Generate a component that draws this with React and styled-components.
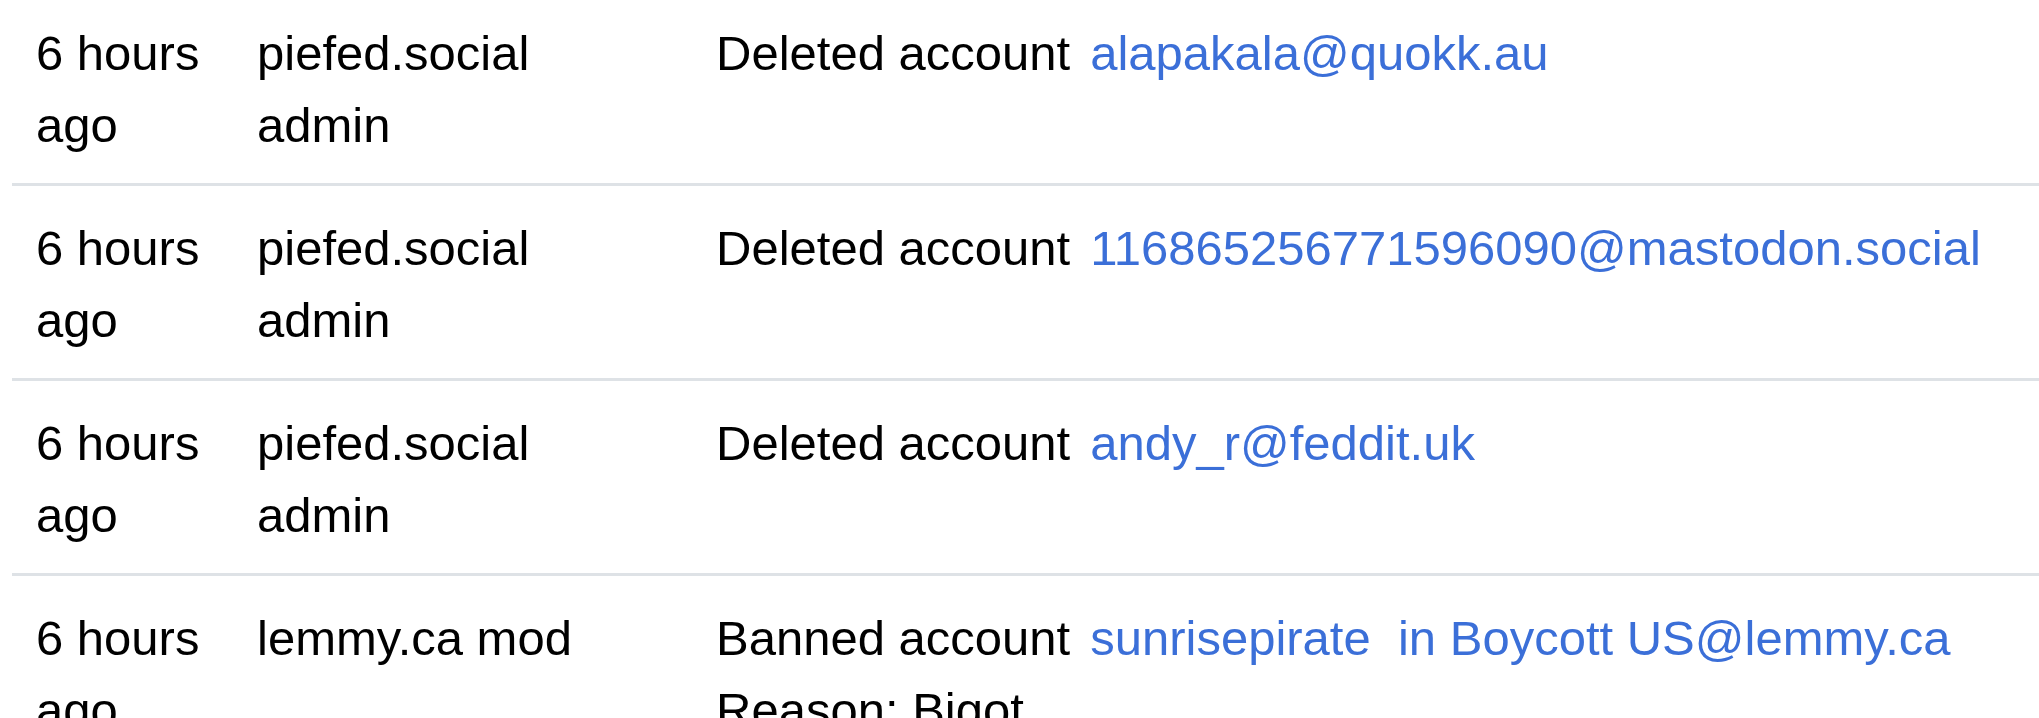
import styled, { createGlobalStyle } from "styled-components";

const GlobalStyle = createGlobalStyle`
  body {
    margin: 0;
    background: #ffffff;
    color: #000000;
    font-family: "Liberation Sans", Arial, sans-serif;
    overflow: hidden;
  }
`;

const Page = styled.div`
  padding-left: 12px;
  margin-top: -9px;
`;

const Table = styled.div`
  display: grid;
  grid-template-columns: 221px 459px 1fr;
`;

const Row = styled.div`
  display: contents;
`;

const Cell = styled.div`
  padding: 26px ${(p) => p.$padRight || 24}px 22px 24px;
  border-bottom: 3px solid #dee2e6;
  font-size: 49px;
  line-height: 72px;
`;

const Action = styled.span`
  margin-right: 20px;
`;

const Link = styled.a`
  color: #3b6fd8;
  text-decoration: none;
`;

const entries = [
  {
    when: "6 hours ago",
    who: "piefed.social admin",
    action: "Deleted account",
    target: "alapakala@quokk.au",
  },
  {
    when: "6 hours ago",
    who: "piefed.social admin",
    action: "Deleted account",
    target: "116865256771596090@mastodon.social",
  },
  {
    when: "6 hours ago",
    who: "piefed.social admin",
    action: "Deleted account",
    target: "andy_r@feddit.uk",
  },
  {
    when: "6 hours ago",
    who: "lemmy.ca mod",
    action: "Banned account",
    target: "sunrisepirate\u00a0 in Boycott US@lemmy.ca",
    reason: "Bigot",
  },
];

function App() {
  return (
    <Page>
      <GlobalStyle />
      <Table>
        {entries.map((e, i) => (
          <Row key={i}>
            <Cell>{e.when}</Cell>
            <Cell $padRight={40}>{e.who}</Cell>
            <Cell>
              <Action>{e.action}</Action>
              <Link href="#">{e.target}</Link>
              {e.reason ? <div>Reason: {e.reason}</div> : null}
            </Cell>
          </Row>
        ))}
      </Table>
    </Page>
  );
}

export default App;
